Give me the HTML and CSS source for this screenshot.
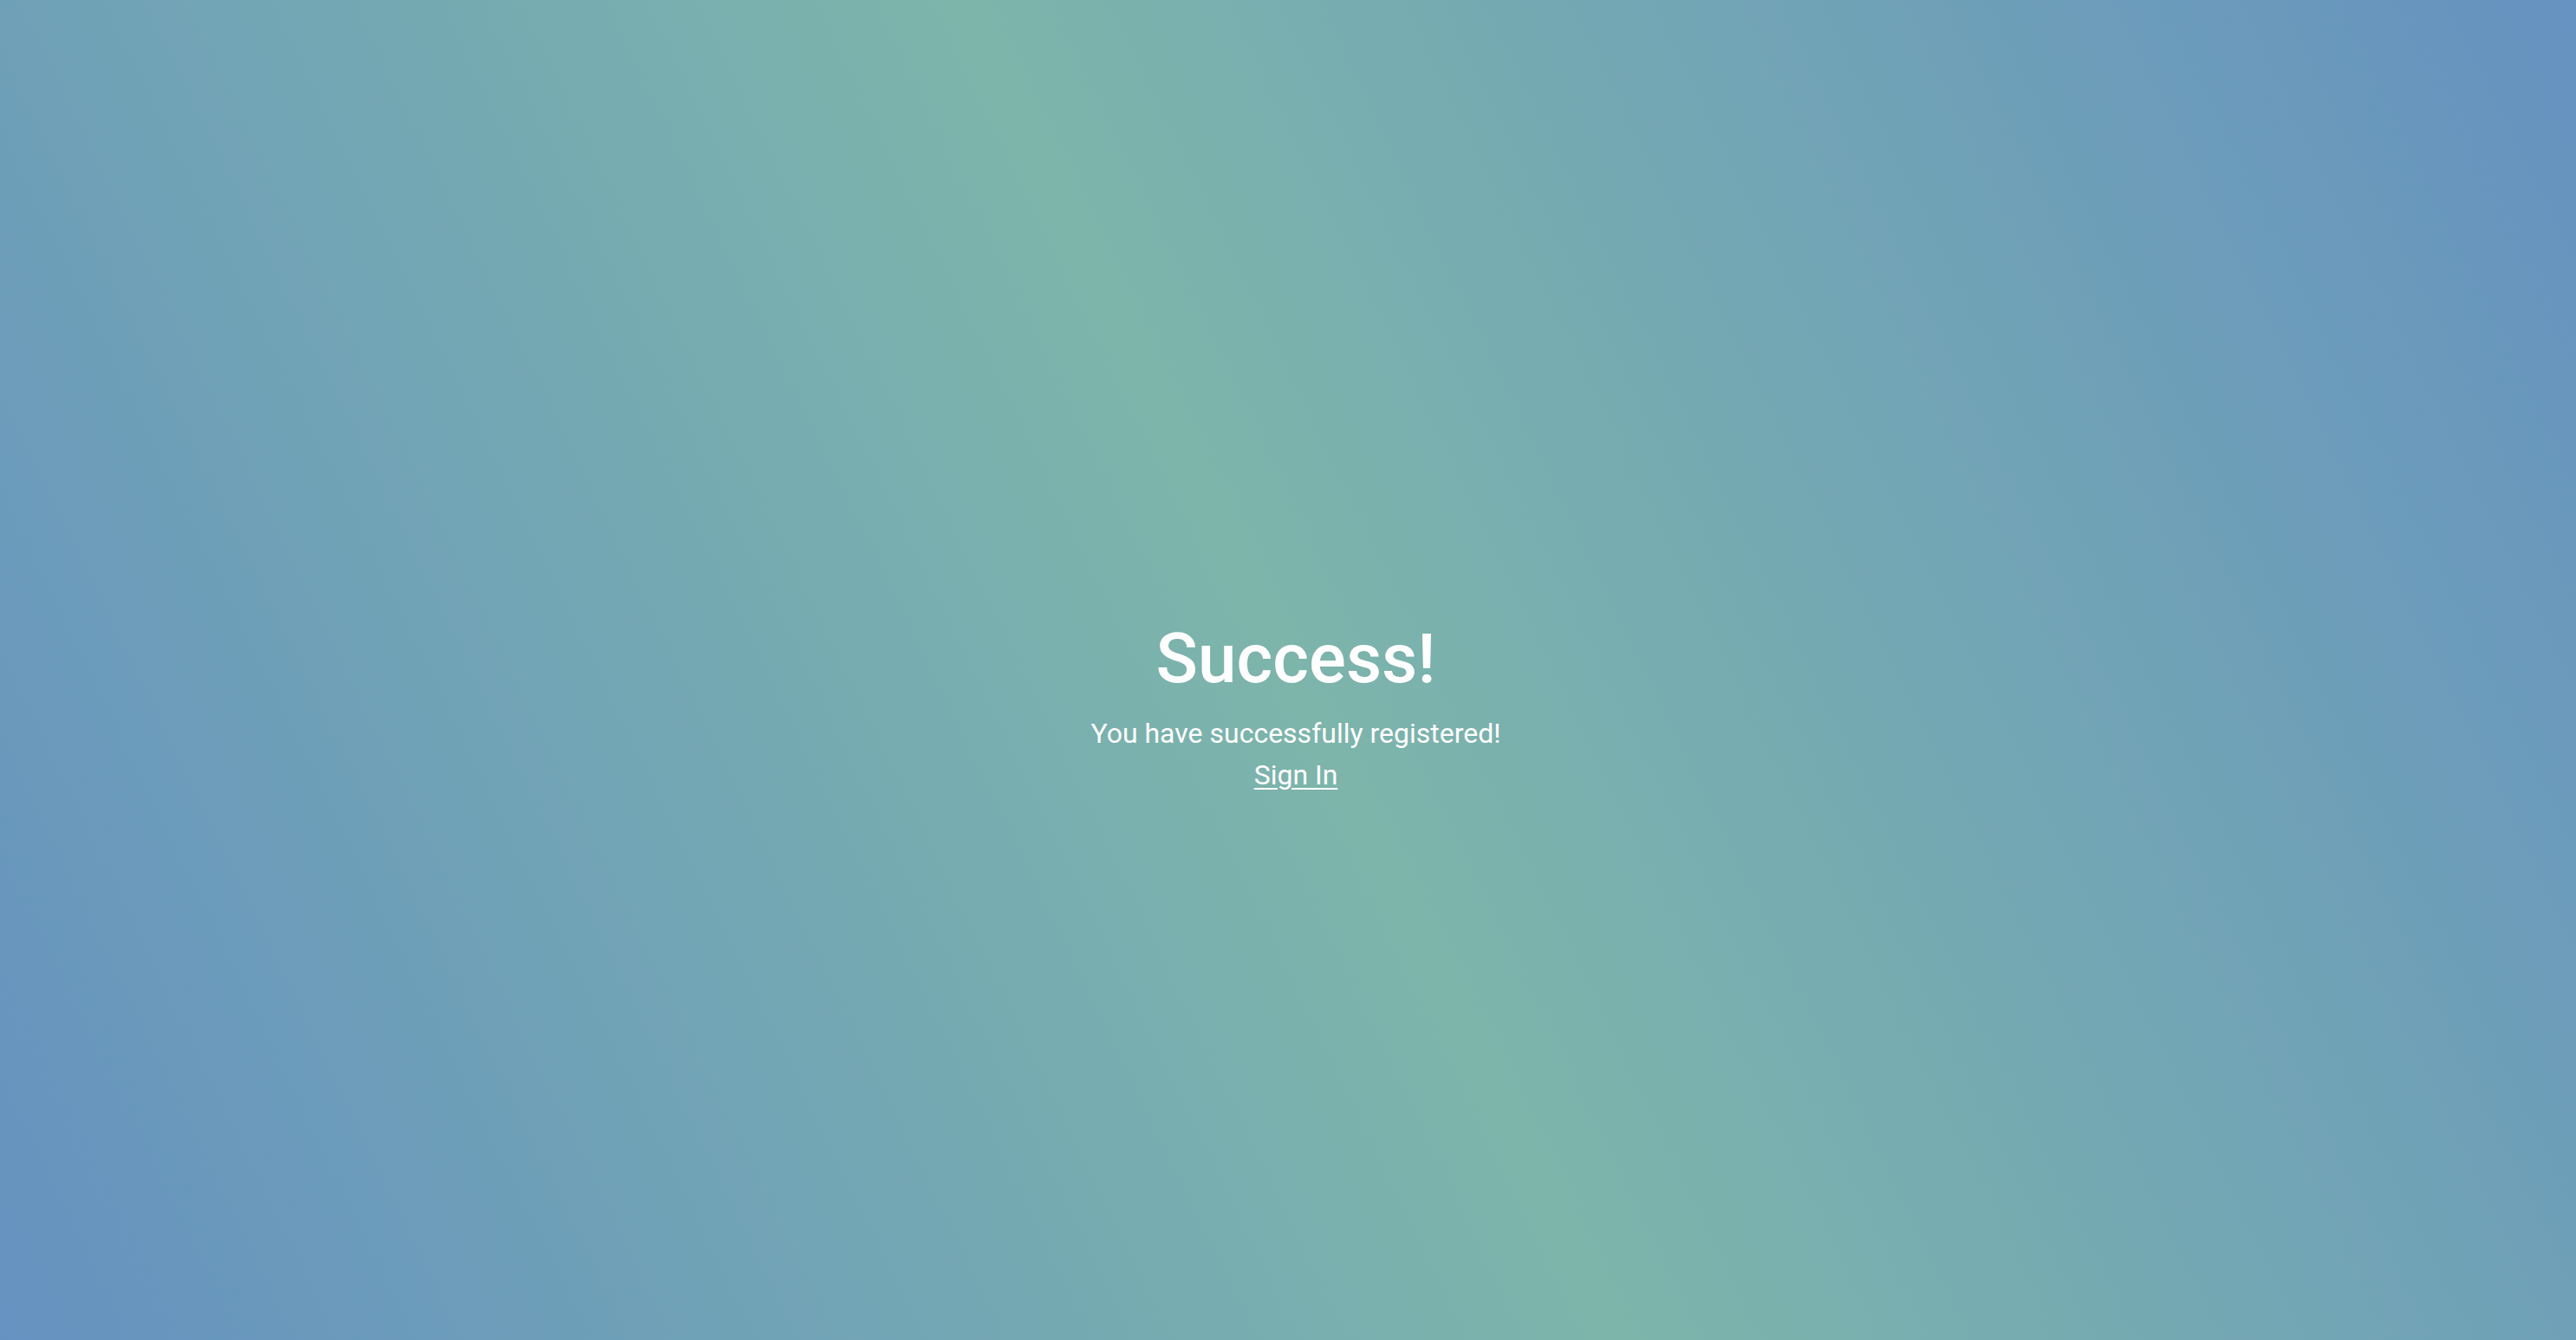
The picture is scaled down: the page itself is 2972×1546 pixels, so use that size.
FILE: index.html
```html
<!DOCTYPE html>
<html lang="en">
<head>
<meta charset="utf-8">
<title>Success</title>
<link rel="stylesheet" href="styles.css">
</head>
<body>
<main class="page">
  <section class="message">
    <h1 class="title">Success!</h1>
    <p class="text">You have successfully registered!<br><a class="link" href="#">Sign In</a></p>
  </section>
</main>
</body>
</html>
```
FILE: styles.css
```css
html, body {
  margin: 0;
  padding: 0;
  height: 100%;
}
body {
  font-family: Roboto, "Noto Sans", "Liberation Sans", sans-serif;
  color: #ffffff;
  background: linear-gradient(64deg, #6592c0 0%, #7db5ab 50%, #6592c0 100%);
}
.page {
  min-height: 100%;
  display: flex;
  align-items: center;
  justify-content: center;
  padding-left: 18px;
  box-sizing: border-box;
}
.message {
  display: flex;
  flex-direction: column;
  align-items: center;
  text-align: center;
  padding-top: 84px;
}
.title {
  margin: 0 0 14px;
  font-size: 80px;
  font-weight: 500;
  line-height: 1.2;
}
.text {
  margin: 0;
  font-size: 32px;
  line-height: 48px;
}
.link {
  color: #ffffff;
  text-decoration: underline;
  text-decoration-thickness: 2px;
  text-underline-offset: 4px;
}
```
